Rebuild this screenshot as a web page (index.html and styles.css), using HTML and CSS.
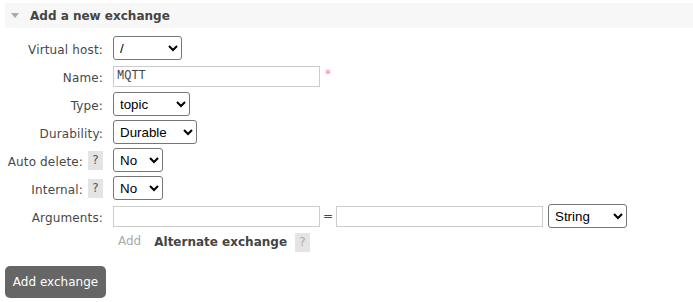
FILE: index.html
```html
<!DOCTYPE html>
<html lang="en">
<head>
    <meta charset="UTF-8">
    <title>Add a new exchange</title>
    <link rel="stylesheet" href="styles.css">
</head>
<body>
    <div class="section">
        <h2 class="section-title"><span class="arrow"></span>Add a new exchange</h2>

        <form class="form">
            <label class="label">Virtual host:</label>
            <div class="field">
                <select class="sel sel-vhost"><option>/</option></select>
            </div>

            <label class="label">Name:</label>
            <div class="field">
                <input type="text" class="text" value="MQTT">
                <span class="mand">*</span>
            </div>

            <label class="label">Type:</label>
            <div class="field">
                <select class="sel sel-type">
                    <option>direct</option>
                    <option>fanout</option>
                    <option>headers</option>
                    <option selected>topic</option>
                </select>
            </div>

            <label class="label">Durability:</label>
            <div class="field">
                <select class="sel sel-durable">
                    <option>Durable</option>
                    <option>Transient</option>
                </select>
            </div>

            <label class="label">Auto delete: <span class="help">?</span></label>
            <div class="field">
                <select class="sel sel-bool"><option>No</option><option>Yes</option></select>
            </div>

            <label class="label">Internal: <span class="help">?</span></label>
            <div class="field">
                <select class="sel sel-bool"><option>No</option><option>Yes</option></select>
            </div>

            <label class="label">Arguments:</label>
            <div class="field">
                <input type="text" class="text">
                <span class="equals">=</span>
                <input type="text" class="text">
                <select class="sel sel-argtype">
                    <option>String</option>
                    <option>Number</option>
                    <option>Boolean</option>
                    <option>List</option>
                </select>
            </div>

            <div class="field field-extra">
                <span class="add-link">Add</span>
                <span class="alt-link">Alternate exchange</span>
                <span class="help help-light">?</span>
            </div>
        </form>

        <button type="button" class="submit">Add exchange</button>
    </div>
</body>
</html>
```

FILE: styles.css
```css
body {
    margin: 0;
    padding: 0;
    font-family: "DejaVu Sans", Verdana, sans-serif;
    font-size: 12px;
    color: #484848;
    background: #ffffff;
}
.section {
    padding: 3px 0 0 5px;
}
.section-title {
    display: flex;
    align-items: center;
    margin: 0;
    height: 25px;
    background: #f7f7f7;
    font-size: 12px;
    font-weight: bold;
    color: #444444;
}
.arrow {
    width: 0;
    height: 0;
    margin: 0 11px 0 6px;
    border-left: 4px solid transparent;
    border-right: 4px solid transparent;
    border-top: 5px solid #aaaaaa;
}
.form {
    display: grid;
    grid-template-columns: 98px 1fr;
    grid-auto-rows: 28px;
    column-gap: 10px;
    margin-top: 6px;
}
.label {
    display: flex;
    align-items: center;
    justify-content: flex-end;
    padding-top: 4px;
    white-space: nowrap;
    letter-spacing: 0.15px;
}
.field {
    display: flex;
    align-items: center;
}
.field-extra {
    grid-column: 2;
    height: 24px;
    padding-left: 5px;
}
.help {
    display: inline-flex;
    align-items: center;
    justify-content: center;
    width: 15px;
    height: 19px;
    margin-left: 5px;
    margin-top: -4px;
    background: #e4e4e4;
    color: #555555;
    font-size: 12px;
    letter-spacing: 0;
}
.help-light {
    margin-left: 8px;
    margin-top: 0;
    color: #aaaaaa;
}
.sel {
    box-sizing: border-box;
    height: 24px;
    padding: 0 2px;
    border: 1px solid #767676;
    border-radius: 3px;
    background: #ffffff;
    font-family: "Liberation Sans", Arial, sans-serif;
    font-size: 13.33px;
    color: #000000;
}
.sel-vhost { width: 69px; }
.sel-type { width: 77px; }
.sel-durable { width: 84px; }
.sel-bool { width: 50px; }
.sel-argtype { width: 79px; margin-left: 5px; }
.text {
    box-sizing: border-box;
    width: 207px;
    height: 21px;
    margin: 0;
    padding: 0 3px;
    border: 1px solid #cccccc;
    font-family: "Liberation Mono", "Courier New", monospace;
    font-size: 12px;
    color: #444444;
}
.mand {
    margin-left: 5px;
    margin-top: -4px;
    color: #ff8888;
    font-size: 12px;
}
.equals {
    width: 16px;
    text-align: center;
    color: #484848;
}
.add-link {
    color: #aaaaaa;
    margin-top: -3px;
}
.alt-link {
    margin-left: 13px;
    font-weight: bold;
    color: #444444;
}
.submit {
    display: block;
    margin-top: 8px;
    width: 101px;
    height: 32px;
    padding: 0;
    border: none;
    border-radius: 5px;
    background: #666666;
    color: #ffffff;
    font-family: "DejaVu Sans", Verdana, sans-serif;
    font-size: 12px;
}
```
